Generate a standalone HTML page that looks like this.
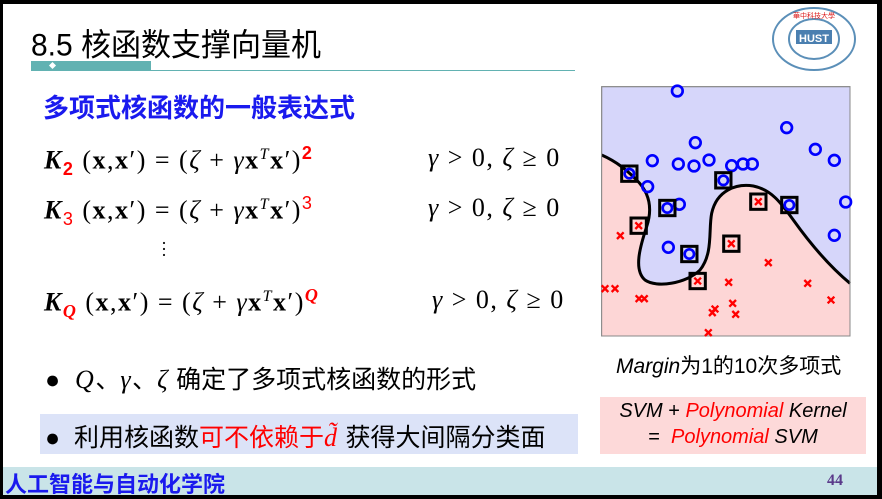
<!DOCTYPE html>
<html><head><meta charset="utf-8"><style>
*{margin:0;padding:0;box-sizing:border-box}
body{width:882px;height:499px;overflow:hidden;background:#000;position:relative;font-family:"Liberation Sans","Noto Sans CJK SC",sans-serif}
#s{position:absolute;left:3px;top:4px;width:874px;height:491px;background:#fff;overflow:hidden}
.a{position:absolute;white-space:nowrap}
.m{font-family:"Liberation Serif","DejaVu Serif",serif;font-size:26px;color:#000;letter-spacing:1.5px}
.r{color:#f00}
.bi{font-weight:bold;font-style:italic}
.b{font-weight:bold}
i{font-style:italic}
</style></head><body>
<div id="s"></div>
<div class="a" style="left:31px;top:20px;font-size:30px;color:#000;transform:scaleY(1.05)">8.5 核函数支撑向量机</div>
<div class="a" style="left:31px;top:61px;width:120px;height:10px;background:#62b2b2"></div>
<div class="a" style="left:150px;top:70px;width:425px;height:1px;background:#62b2b2"></div>
<div class="a" style="left:50px;top:63px;width:5px;height:5px;background:#fff;transform:rotate(45deg)"></div>
<svg class="a" style="left:770px;top:6px" width="88" height="66" viewBox="0 0 88 66">
<ellipse cx="44" cy="33" rx="41" ry="31" fill="#fff" stroke="#5b8fb8" stroke-width="2"/>
<ellipse cx="44" cy="33" rx="25" ry="20" fill="#fff" stroke="#5b8fb8" stroke-width="2"/>
<rect x="26" y="24" width="36" height="14" fill="#4a7fb0"/>
<text x="44" y="36" font-size="11" font-weight="bold" fill="#fff" text-anchor="middle" font-family="Liberation Sans">HUST</text>
<text x="44" y="12" font-size="7" fill="#d22" text-anchor="middle">華中科技大學</text>
</svg>
<div class="a" style="left:43px;top:88px;font-size:26px;font-weight:bold;color:#1a1aee">多项式核函数的一般表达式</div>

<div class="a m" style="left:44px;top:143px"><span class="bi">K</span><sub class="r b" style="font-size:18px;font-family:'Liberation Sans'">2</sub> (<b>x</b>,<b>x</b>′) = (<i>ζ</i> + <i>γ</i><b>x</b><sup style="font-size:16px"><i>T</i></sup><b>x</b>′)<sup class="r b" style="font-size:18px;font-family:'Liberation Sans'">2</sup></div>
<div class="a m" style="left:428px;top:143px"><i>γ</i> &gt; 0, <i>ζ</i> ≥ 0</div>
<div class="a m" style="left:44px;top:193px"><span class="bi">K</span><sub class="r" style="font-size:18px;font-family:'Liberation Sans'">3</sub> (<b>x</b>,<b>x</b>′) = (<i>ζ</i> + <i>γ</i><b>x</b><sup style="font-size:16px"><i>T</i></sup><b>x</b>′)<sup class="r" style="font-size:18px;font-family:'Liberation Sans'">3</sup></div>
<div class="a m" style="left:428px;top:193px"><i>γ</i> &gt; 0, <i>ζ</i> ≥ 0</div>
<div class="a m" style="left:161px;top:240px;font-size:18px;line-height:6px">·<br>·<br>·</div>
<div class="a m" style="left:44px;top:285px"><span class="bi">K</span><sub class="r bi" style="font-size:18px">Q</sub> (<b>x</b>,<b>x</b>′) = (<i>ζ</i> + <i>γ</i><b>x</b><sup style="font-size:16px"><i>T</i></sup><b>x</b>′)<sup class="r bi" style="font-size:18px">Q</sup></div>
<div class="a m" style="left:432px;top:285px"><i>γ</i> &gt; 0, <i>ζ</i> ≥ 0</div>

<div class="a" style="left:45px;top:360px;font-size:25px;color:#000">●&nbsp;<span class="m" style="font-style:italic">&nbsp;Q</span>、<span class="m"><i>γ</i></span>、<span class="m"><i>ζ</i></span> 确定了多项式核函数的形式</div>
<div class="a" style="left:40px;top:414px;width:538px;height:40px;background:#dce3f8"></div>
<div class="a" style="left:45px;top:418px;font-size:25px;color:#000">●&nbsp; 利用核函数<span class="r">可不依赖于<span class="m r"><i>d̃</i></span></span> 获得大间隔分类面</div>

<svg class="a" style="left:590px;top:80px" width="270" height="270" viewBox="0 0 810 810">
<rect x="35" y="20" width="745" height="748" fill="#d6d6fa" stroke="#888" stroke-width="3"/>
<path d="M35,225 C80,245 110,270 140,300 C175,335 190,380 170,440 C150,500 130,570 165,600 C200,625 290,610 330,570 C370,520 355,450 365,400 C380,330 440,310 490,318 C550,330 580,380 610,420 C660,490 720,560 780,610 L780,768 L35,768 Z" fill="#fdd6d6"/>
<path d="M35,225 C80,245 110,270 140,300 C175,335 190,380 170,440 C150,500 130,570 165,600 C200,625 290,610 330,570 C370,520 355,450 365,400 C380,330 440,310 490,318 C550,330 580,380 610,420 C660,490 720,560 780,610" fill="none" stroke="#000" stroke-width="9"/>
<rect x="35" y="20" width="745" height="748" fill="none" stroke="#888" stroke-width="3"/>
<g fill="none" stroke="#00f" stroke-width="8">
<circle cx="262" cy="33" r="16"/><circle cx="590" cy="143" r="16"/><circle cx="316" cy="188" r="16"/><circle cx="676" cy="208" r="16"/><circle cx="733" cy="241" r="16"/><circle cx="187" cy="242" r="16"/><circle cx="265" cy="252" r="16"/><circle cx="312" cy="258" r="16"/><circle cx="357" cy="240" r="16"/><circle cx="425" cy="257" r="16"/><circle cx="459" cy="252" r="16"/><circle cx="487" cy="252" r="16"/><circle cx="173" cy="320" r="16"/><circle cx="268" cy="373" r="16"/><circle cx="767" cy="366" r="16"/><circle cx="733" cy="466" r="16"/><circle cx="235" cy="502" r="16"/>
<circle cx="118" cy="281" r="14"/><circle cx="232" cy="384" r="14"/><circle cx="400" cy="301" r="14"/><circle cx="598" cy="375" r="14"/><circle cx="298" cy="522" r="14"/>
</g>
<g fill="none" stroke="#000" stroke-width="9">
<rect x="95" y="258" width="46" height="46"/><rect x="209" y="361" width="46" height="46"/><rect x="377" y="278" width="46" height="46"/><rect x="575" y="352" width="46" height="46"/><rect x="275" y="499" width="46" height="46"/>
<rect x="123" y="414" width="46" height="46"/><rect x="482" y="342" width="46" height="46"/><rect x="401" y="468" width="46" height="46"/><rect x="300" y="580" width="46" height="46"/>
</g>
<g stroke="#f00" stroke-width="7">
<path d="M136,427l20,20M156,427l-20,20 M495,355l20,20M515,355l-20,20 M414,481l20,20M434,481l-20,20 M313,593l20,20M333,593l-20,20
M81,457l20,20M101,457l-20,20 M525,538l20,20M545,538l-20,20 M406,597l20,20M426,597l-20,20 M643,600l20,20M663,600l-20,20 M35,616l20,20M55,616l-20,20 M65,616l20,20M85,616l-20,20 M137,646l20,20M157,646l-20,20 M153,646l20,20M173,646l-20,20 M713,650l20,20M733,650l-20,20 M418,660l20,20M438,660l-20,20 M365,677l20,20M385,677l-20,20 M357,688l20,20M377,688l-20,20 M427,693l20,20M447,693l-20,20 M345,748l20,20M365,748l-20,20"/>
</g>
</svg>
<div class="a" style="left:616px;top:350px;font-size:21px;color:#000"><i>Margin</i>为1的10次多项式</div>
<div class="a" style="left:600px;top:397px;width:266px;height:57px;background:#fdd9d9"></div>
<div class="a" style="left:600px;top:398px;width:266px;text-align:center;font-size:20px;line-height:26px;color:#000"><i>SVM</i> + <i class="r">Polynomial</i> <i>Kernel</i><br>= &nbsp;<i class="r">Polynomial</i> <i>SVM</i></div>

<div class="a" style="left:3px;top:467px;width:874px;height:28px;background:#c9e4e8"></div>
<div class="a" style="left:5px;top:467px;font-size:22px;font-weight:bold;color:#1a1aee">人工智能与自动化学院</div>
<div class="a" style="left:827px;top:472px;font-size:16px;font-weight:bold;color:#5a3a8a;font-family:'Liberation Serif',serif">44</div>
</body></html>
